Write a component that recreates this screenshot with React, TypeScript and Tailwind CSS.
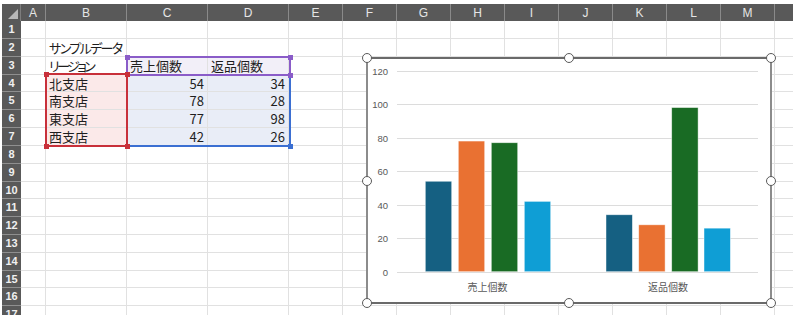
import React from 'react';

const COLS = ['A', 'B', 'C', 'D', 'E', 'F', 'G', 'H', 'I', 'J', 'K', 'L', 'M', 'N'];
const ROWS = Array.from({ length: 17 }, (_, i) => i + 1);

type Cell = { text: string; right?: boolean; bg?: string; extra?: string };

const CELLS: Record<string, Cell> = {
  B2: { text: 'サンプルデータ', extra: '[font-feature-settings:"palt"] tracking-[-1.6px]' },
  B3: { text: 'リージョン', extra: '[font-feature-settings:"palt"] tracking-[-2.6px]' },
  C3: { text: '売上個数', bg: 'bg-[#f2eff8]' },
  D3: { text: '返品個数', bg: 'bg-[#f2eff8]' },
  B4: { text: '北支店', bg: 'bg-[#fbe9e9]' },
  B5: { text: '南支店', bg: 'bg-[#fbe9e9]' },
  B6: { text: '東支店', bg: 'bg-[#fbe9e9]' },
  B7: { text: '西支店', bg: 'bg-[#fbe9e9]' },
  C4: { text: '54', right: true, bg: 'bg-[#e9edf7]' },
  D4: { text: '34', right: true, bg: 'bg-[#e9edf7]' },
  C5: { text: '78', right: true, bg: 'bg-[#e9edf7]' },
  D5: { text: '28', right: true, bg: 'bg-[#e9edf7]' },
  C6: { text: '77', right: true, bg: 'bg-[#e9edf7]' },
  D6: { text: '98', right: true, bg: 'bg-[#e9edf7]' },
  C7: { text: '42', right: true, bg: 'bg-[#e9edf7]' },
  D7: { text: '26', right: true, bg: 'bg-[#e9edf7]' },
};

const Y0 = 271.7;
const K = 1.675;
const yOf = (v: number) => Y0 - v * K;
const COLORS = ['#156082', '#e97132', '#196b24', '#0f9ed5'];
const GROUPS = [
  { label: '売上個数', cx: 487.5, xs: [425.3, 458.3, 491.3, 524.3], vals: [54, 78, 77, 42] },
  { label: '返品個数', cx: 668, xs: [606, 638.7, 671.7, 704], vals: [34, 28, 98, 26] },
];

function Chart() {
  return (
    <svg width={402} height={243} viewBox="368 59 402 243" className="block">
      {[0, 20, 40, 60, 80, 100, 120].map((v) => {
        const y = Math.round(yOf(v)) + 0.5;
        return (
          <g key={v}>
            <line x1={397} x2={758} y1={y} y2={y} stroke="#dcdcdc" strokeWidth={1} />
            <text
              x={388}
              y={y + 3.3}
              textAnchor="end"
              fontSize={9.5}
              fill="#595959"
              fontFamily='"Liberation Sans", Arial, sans-serif'
            >
              {v}
            </text>
          </g>
        );
      })}
      {GROUPS.map((g) => (
        <g key={g.label}>
          {g.vals.map((v, i) => (
            <rect
              key={i}
              x={g.xs[i]}
              y={yOf(v)}
              width={26.4}
              height={Y0 - yOf(v)}
              fill={COLORS[i]}
              stroke="#ffffff"
              strokeOpacity={0.6}
              strokeWidth={0.75}
            />
          ))}
          <text
            x={g.cx}
            y={290.5}
            textAnchor="middle"
            fontSize={10}
            fill="#595959"
            fontFamily='"Noto Sans CJK JP", sans-serif'
          >
            {g.label}
          </text>
        </g>
      ))}
    </svg>
  );
}

function Sq({ className }: { className: string }) {
  return <div className={`w-[5px] h-[5px] ${className}`} />;
}

function Ring() {
  return <div className="w-[10px] h-[10px] rounded-full bg-white border-[1.5px] border-[#5a5a5a]" />;
}

export default function App() {
  return (
    <div className="relative w-[793px] h-[315px] overflow-hidden bg-white pl-[2px] pt-[4px] font-['Noto_Sans_CJK_JP',sans-serif]">
      <div className="grid grid-cols-[19px_25px_81px_81px_81px_54px_54px_54px_54px_54px_54px_54px_54px_54px_54px] grid-rows-[17px_18px_18px_18px_17px_18px_18px_18px_18px_18px_17px_18px_18px_18px_18px_17px_18px_18px]">
        {/* corner */}
        <div className="flex items-end justify-end p-[2px] bg-[#595959] border-r border-[#7d7d7d]">
          <div className="w-0 h-0 border-l-[10px] border-l-transparent border-b-[10px] border-b-[#b8b8b8]" />
        </div>
        {COLS.map((c) => (
          <div
            key={c}
            className="flex items-center justify-center bg-[#595959] border-r border-[#8a8a8a] text-[12px] leading-none text-[#e6e6e6] font-['Liberation_Sans',Arial,sans-serif]"
          >
            {c === 'N' ? '' : c}
          </div>
        ))}
        {ROWS.map((r) => (
          <React.Fragment key={r}>
            <div className="flex items-center justify-center bg-[#595959] border-b border-[#8f8f8f] text-[11px] font-bold leading-none text-[#f0f0f0] font-['Liberation_Sans',Arial,sans-serif]">
              {r}
            </div>
            {COLS.map((c) => {
              const cell = CELLS[`${c}${r}`];
              return (
                <div
                  key={c}
                  className={`relative z-[1] flex items-center border-r border-b border-[#e1e1e1] px-[3px] text-[13px] leading-none text-[#1e1e1e] whitespace-nowrap overflow-visible ${
                    cell?.bg ?? ''
                  } ${cell?.right ? 'justify-end' : 'justify-start'} ${cell?.extra ?? ''}`}
                >
                  {cell?.text ?? ''}
                </div>
              );
            })}
          </React.Fragment>
        ))}
      </div>

      {/* range highlights (selection overlays) */}
      <div className="absolute z-[1] left-[126px] top-[74px] w-[165px] h-[73px] border-2 border-[#3b6fd2]">
        <div className="absolute -inset-[3.5px] flex items-end justify-end">
          <Sq className="bg-[#3b6fd2]" />
        </div>
      </div>
      <div className="absolute z-[2] left-[126px] top-[56px] w-[165px] h-[20px] border-2 border-[#8a5cc8]">
        <div className="absolute -inset-[3.5px] flex flex-col justify-between">
          <div className="flex justify-between">
            <Sq className="bg-[#8a5cc8]" />
            <Sq className="bg-[#8a5cc8]" />
          </div>
          <div className="flex justify-end">
            <Sq className="bg-[#8a5cc8]" />
          </div>
        </div>
      </div>
      <div className="absolute z-[2] left-[45px] top-[73px] w-[83px] h-[74px] border-2 border-[#c8303a]">
        <div className="absolute -inset-[3.5px] flex flex-col justify-between">
          <div className="flex justify-between">
            <Sq className="bg-[#c8303a]" />
            <Sq className="bg-[#c8303a]" />
          </div>
          <div className="flex justify-between">
            <Sq className="bg-[#c8303a]" />
            <Sq className="bg-[#c8303a]" />
          </div>
        </div>
      </div>

      {/* chart (floating object) */}
      <div className="absolute z-[3] left-[366px] top-[57px] w-[406px] h-[247px] bg-white border-2 border-x-[#8c8c8c] border-y-[#6a6a6a]">
        <Chart />
        <div className="absolute -inset-[6px] flex flex-col justify-between">
          <div className="flex justify-between">
            <Ring />
            <Ring />
            <Ring />
          </div>
          <div className="flex justify-between">
            <Ring />
            <Ring />
          </div>
          <div className="flex justify-between">
            <Ring />
            <Ring />
            <Ring />
          </div>
        </div>
      </div>
    </div>
  );
}
